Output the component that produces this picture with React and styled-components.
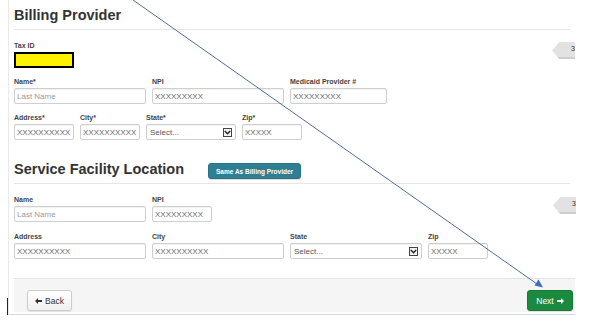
import React from 'react';
import styled, { createGlobalStyle } from 'styled-components';

const Global = createGlobalStyle`
  html, body { margin: 0; padding: 0; background: #fff; }
  body { font-family: "Liberation Sans", Arial, Helvetica, sans-serif; color: #333; }
  *, *::before, *::after { box-sizing: border-box; }
`;

const Page = styled.div`
  position: relative;
  width: 600px;
  height: 324px;
  overflow: hidden;
  background: #fff;
`;

const Frame = styled.div`
  margin-left: 8px;
  width: 567px;
  height: 315px;
  border-left: 1px solid #e9e9e9;
  border-bottom: 1px solid #cfdce2;
  padding: 5px 0 0 5px;
  display: flex;
  flex-direction: column;
`;

const Section = styled.section`
  display: flex;
  flex-direction: column;
  margin-top: ${p => p.$top || 0}px;
`;

const Header = styled.div`
  display: flex;
  align-items: flex-end;
  gap: 24px;
  padding-bottom: 4px;
  margin-right: 5px;
  border-bottom: 1px solid #e6e6e6;
`;

const Title = styled.h2`
  margin: 0;
  font-size: 14.5px;
  line-height: 20px;
  font-weight: bold;
  color: #333;
  white-space: nowrap;
`;

const TealButton = styled.button`
  height: 16px;
  width: 93px;
  margin-bottom: 0;
  padding: 0;
  border: 1px solid #2a7285;
  border-radius: 3px;
  background: #2f7f93;
  color: #fff;
  font-family: inherit;
  font-size: 6.5px;
  font-weight: bold;
  box-shadow: 0 1px 1px rgba(0, 0, 0, 0.15);
`;

const Fields = styled.div`
  display: flex;
  flex-direction: column;
  gap: ${p => p.$gap}px;
  margin-top: 11px;
`;

const Row = styled.div`
  display: grid;
  grid-template-columns: ${p => p.$cols};
  column-gap: 6px;
`;

const Field = styled.div`
  display: flex;
  flex-direction: column;
`;

const Label = styled.label`
  display: block;
  font-size: 7px;
  line-height: 9px;
  font-weight: bold;
  color: #444;
  margin-bottom: 2px;
  white-space: nowrap;
`;

const Input = styled.input`
  width: 100%;
  height: 16px;
  margin: 0;
  padding: 0 2px;
  border: 1px solid #cfcfcf;
  border-radius: 2px;
  background: #fff;
  box-shadow: inset 0 1px 1px rgba(0, 0, 0, 0.06);
  font-family: "Liberation Sans", Arial, sans-serif;
  font-size: 8px;
  color: #6a6a6a;
  outline: none;
  &::placeholder { color: #9a9a9a; opacity: 1; }
`;

const Redacted = styled.div`
  width: 60px;
  height: 16px;
  background: #fff200;
  border: 2px solid #000;
`;

const SelectBox = styled.div`
  display: flex;
  align-items: center;
  justify-content: space-between;
  height: 16px;
  padding: 0 3px 0 3px;
  border: 1px solid #cfcfcf;
  border-radius: 2px;
  background: #fff;
  box-shadow: inset 0 1px 1px rgba(0, 0, 0, 0.06);
  font-size: 8px;
  color: #555;
`;

const Caret = styled.span`
  display: flex;
  align-items: center;
  justify-content: center;
  width: 9px;
  height: 9px;
  border: 1px solid #444;
  background: #f2f2f2;
`;

const Footer = styled.div`
  display: flex;
  justify-content: space-between;
  align-items: flex-start;
  margin-top: 19px;
  height: 34px;
  padding: 11px 2px 0 13px;
  background: #f5f5f5;
  border-top: 1px solid #e4e4e4;
`;

const NavButton = styled.button`
  display: flex;
  align-items: center;
  justify-content: center;
  gap: 3px;
  width: ${p => p.$w}px;
  height: 21px;
  padding: 0;
  border-radius: 3px;
  font-family: inherit;
  font-size: 8.5px;
  border: 1px solid ${p => (p.$primary ? '#157a35' : '#cccccc')};
  background: ${p => (p.$primary ? '#1b8a3e' : 'linear-gradient(#ffffff, #f0f0f0)')};
  color: ${p => (p.$primary ? '#fff' : '#333')};
  box-shadow: 0 1px 1px rgba(0, 0, 0, 0.08);
`;

const SideTab = styled.div`
  position: absolute;
  left: ${p => p.$x}px;
  top: ${p => p.$y}px;
  width: 23px;
  height: 17px;
  background: #e2e2e2;
  clip-path: polygon(32% 0, 100% 0, 100% 100%, 32% 100%, 0 50%);
  box-shadow: inset 0 -2px 0 #cdcdcd;
  font-size: 7px;
  color: #333;
  text-align: right;
  line-height: 14px;
  padding-right: 0;
  overflow: hidden;
`;

const Cursor = styled.div`
  position: absolute;
  left: 7px;
  top: 298px;
  width: 1px;
  height: 17px;
  background: #222;
`;

const Overlay = styled.svg`
  position: absolute;
  left: 0;
  top: 0;
  pointer-events: none;
`;

const ChevronDown = () => (
  <svg width="7" height="5" viewBox="0 0 7 5">
    <path d="M0.8 1 L3.5 3.8 L6.2 1" fill="none" stroke="#222" strokeWidth="1.4" />
  </svg>
);

const ArrowLeft = () => (
  <svg width="7" height="6" viewBox="0 0 7 6">
    <path d="M0 3 L3 0 L3 2 L7 2 L7 4 L3 4 L3 6 Z" fill="#333" />
  </svg>
);

const ArrowRight = () => (
  <svg width="7" height="6" viewBox="0 0 7 6">
    <path d="M7 3 L4 0 L4 2 L0 2 L0 4 L4 4 L4 6 Z" fill="#fff" />
  </svg>
);

const TextInput = ({ value, placeholder }) =>
  value ? (
    <Input defaultValue={value} readOnly />
  ) : (
    <Input placeholder={placeholder} readOnly />
  );

const Select = () => (
  <SelectBox>
    <span>Select...</span>
    <Caret>
      <ChevronDown />
    </Caret>
  </SelectBox>
);

const X9 = 'XXXXXXXXX';
const X10 = 'XXXXXXXXXX';

export default function App() {
  return (
    <Page>
      <Global />
      <Frame>
        <Section>
          <Header>
            <Title>Billing Provider</Title>
          </Header>
          <Fields $gap={9}>
            <Row $cols="60px">
              <Field>
                <Label>Tax ID</Label>
                <Redacted />
              </Field>
            </Row>
            <Row $cols="132px 132px 97px">
              <Field>
                <Label>Name*</Label>
                <TextInput placeholder="Last Name" />
              </Field>
              <Field>
                <Label>NPI</Label>
                <TextInput value={X9} />
              </Field>
              <Field>
                <Label>Medicaid Provider #</Label>
                <TextInput value={X9} />
              </Field>
            </Row>
            <Row $cols="60px 60px 90px 60px">
              <Field>
                <Label>Address*</Label>
                <TextInput value={X10} />
              </Field>
              <Field>
                <Label>City*</Label>
                <TextInput value={X10} />
              </Field>
              <Field>
                <Label>State*</Label>
                <Select />
              </Field>
              <Field>
                <Label>Zip*</Label>
                <TextInput value="XXXXX" />
              </Field>
            </Row>
          </Fields>
        </Section>

        <Section $top={19}>
          <Header>
            <Title>Service Facility Location</Title>
            <TealButton>Same As Billing Provider</TealButton>
          </Header>
          <Fields $gap={10}>
            <Row $cols="132px 60px">
              <Field>
                <Label>Name</Label>
                <TextInput placeholder="Last Name" />
              </Field>
              <Field>
                <Label>NPI</Label>
                <TextInput value={X9} />
              </Field>
            </Row>
            <Row $cols="132px 132px 132px 60px">
              <Field>
                <Label>Address</Label>
                <TextInput value={X10} />
              </Field>
              <Field>
                <Label>City</Label>
                <TextInput value={X10} />
              </Field>
              <Field>
                <Label>State</Label>
                <Select />
              </Field>
              <Field>
                <Label>Zip</Label>
                <TextInput value="XXXXX" />
              </Field>
            </Row>
          </Fields>
        </Section>

        <Footer>
          <NavButton $w={45}>
            <ArrowLeft />
            <span>Back</span>
          </NavButton>
          <NavButton $w={46} $primary>
            <span>Next</span>
            <ArrowRight />
          </NavButton>
        </Footer>
      </Frame>

      <SideTab $x={552} $y={42}>3</SideTab>
      <SideTab $x={553} $y={197}>3</SideTab>
      <Cursor />

      <Overlay width="600" height="324" viewBox="0 0 600 324">
        <line x1="133" y1="0" x2="537" y2="284" stroke="#4f6f9c" strokeWidth="1" />
        <polygon points="543,287.5 534.5,285.5 538.5,279.5" fill="#3c70bf" />
      </Overlay>
    </Page>
  );
}
